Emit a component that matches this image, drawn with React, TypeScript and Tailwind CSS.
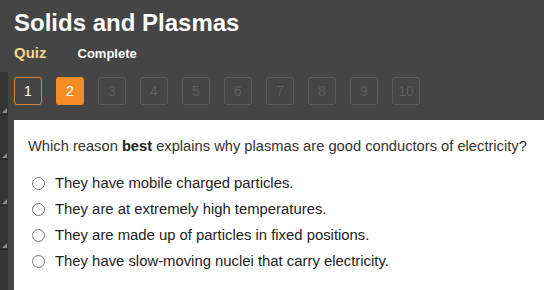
import React from "react";

const options = [
  "They have mobile charged particles.",
  "They are at extremely high temperatures.",
  "They are made up of particles in fixed positions.",
  "They have slow-moving nuclei that carry electricity.",
];

const StripSegment = ({ h }: { h: string }) => (
  <div className={`relative ${h} border-b border-[#262626]`}>
    <div className="absolute right-[1px] bottom-[1px] w-0 h-0 border-l-[5px] border-l-transparent border-b-[5px] border-b-[#8a8a8a]" />
  </div>
);

export default function App() {
  return (
    <div className="flex w-[544px] h-[290px] overflow-hidden bg-[#454545] font-['Liberation_Sans',Arial,sans-serif]">
      {/* left rail */}
      <div className="w-[8px] flex flex-col">
        <div className="h-[72px] shrink-0" />
        <div className="flex-1 bg-[#343434] flex flex-col">
          <StripSegment h="h-[43px]" />
          <StripSegment h="h-[45px]" />
          <StripSegment h="h-[46px]" />
          <StripSegment h="h-[44px]" />
        </div>
      </div>

      <div className="flex-1 flex flex-col pl-[6px]">
        <h1 className="pt-[8px] text-[24px] leading-[30px] font-bold text-white">Solids and Plasmas</h1>
        <div className="flex items-baseline mt-[4px] h-[20px]">
          <span className="text-[15px] font-bold text-[#f2d48e]">Quiz</span>
          <span className="ml-[31px] text-[13px] font-bold text-white">Complete</span>
        </div>
        <div className="flex gap-[14px] mt-[15px] h-[28px]">
          {Array.from({ length: 10 }, (_, i) => i + 1).map((n) => (
            <div
              key={n}
              className={
                n === 1
                  ? "w-[28px] h-[28px] rounded-[3px] border border-[#d4883a] flex items-center justify-center text-[14px] text-white"
                  : n === 2
                  ? "w-[28px] h-[28px] rounded-[3px] bg-[#f38c25] flex items-center justify-center text-[14px] text-white"
                  : "w-[28px] h-[28px] rounded-[3px] border border-[#5a5a5a] flex items-center justify-center text-[14px] text-[#5e5e5e]"
              }
            >
              {n}
            </div>
          ))}
        </div>
        <div className="mt-[15px] flex-1 bg-white pl-[14px] pt-[16px] text-[#333333]">
          <p className="text-[14.7px] leading-[20px]">
            Which reason <b className="text-[#222]">best</b> explains why plasmas are good conductors of electricity?
          </p>
          <div className="mt-[14px] flex flex-col">
            {options.map((o) => (
              <label key={o} className="flex items-center h-[26px] pl-[4px]">
                <span className="w-[13px] h-[13px] rounded-full border border-[#777] bg-white shrink-0" />
                <span className="ml-[10px] text-[14.85px] text-[#222]">{o}</span>
              </label>
            ))}
          </div>
        </div>
      </div>
    </div>
  );
}
